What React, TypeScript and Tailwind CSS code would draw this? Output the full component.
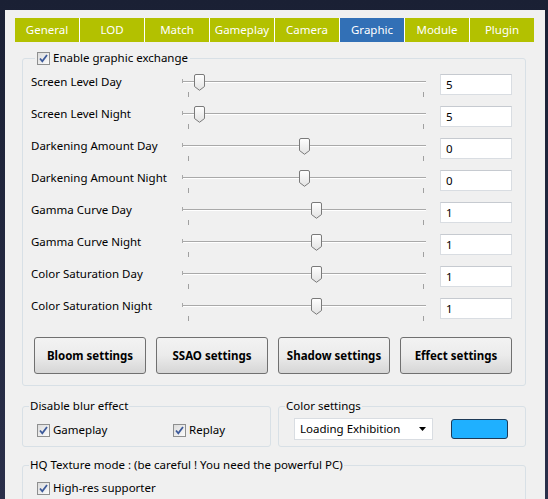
import React from 'react';

const tabs = ['General', 'LOD', 'Match', 'Gameplay', 'Camera', 'Graphic', 'Module', 'Plugin'];

const sliders = [
  { label: 'Screen Level Day', pos: 17, value: '5' },
  { label: 'Screen Level Night', pos: 17, value: '5' },
  { label: 'Darkening Amount Day', pos: 122, value: '0' },
  { label: 'Darkening Amount Night', pos: 122, value: '0' },
  { label: 'Gamma Curve Day', pos: 134, value: '1' },
  { label: 'Gamma Curve Night', pos: 134, value: '1' },
  { label: 'Color Saturation Day', pos: 134, value: '1' },
  { label: 'Color Saturation Night', pos: 134, value: '1' },
];

const buttons = ['Bloom settings', 'SSAO settings', 'Shadow settings', 'Effect settings'];

function CheckBox() {
  return (
    <span className="w-[13px] h-[13px] shrink-0 border border-[#8e8f8f] bg-gradient-to-br from-[#dcdcdc] to-[#fbfbfb] flex items-center justify-center">
      <svg width="11" height="11" viewBox="0 0 11 11">
        <path d="M2 5.5 L4.3 8.3 L9 2" fill="none" stroke="#3d5a9a" strokeWidth="1.8" />
      </svg>
    </span>
  );
}

function Thumb() {
  return (
    <svg width="11" height="17" viewBox="0 0 11 17">
      <defs>
        <linearGradient id="tg" x1="0" y1="0" x2="0" y2="1">
          <stop offset="0" stopColor="#ffffff" />
          <stop offset="1" stopColor="#e2e2e2" />
        </linearGradient>
      </defs>
      <path d="M0.5 2 Q0.5 0.5 2 0.5 H9 Q10.5 0.5 10.5 2 V12.5 L5.5 16.3 L0.5 12.5 Z" fill="url(#tg)" stroke="#7a7a7a" />
    </svg>
  );
}

function SliderRow({ label, pos, value }: { label: string; pos: number; value: string }) {
  return (
    <div className="flex items-start h-[32px]">
      <div className="w-[151px] mt-[8px] leading-[16px]">{label}</div>
      <div className="relative w-[244px] h-[32px]">
        <div className="absolute left-0 right-0 top-[15px] h-px bg-[#a9a9a9]" />
        <div className="absolute left-0 right-0 top-[16px] h-px bg-white" />
        <div className="absolute left-0 top-[13px] w-px h-[4px] bg-[#a9a9a9]" />
        <div className="absolute left-[6px] top-[26px] w-px h-[5px] bg-[#a0a0a0]" />
        <div className="absolute left-[241px] top-[26px] w-px h-[5px] bg-[#a0a0a0]" />
        <div className="absolute top-[8px]" style={{ left: pos - 5 }}>
          <Thumb />
        </div>
      </div>
      <div className="ml-[14px] mt-[8px] w-[72px] h-[21px] bg-white border border-[#d9dde2] border-t-[#c6cad0] pl-[5px] leading-[19px]">
        {value}
      </div>
    </div>
  );
}

export default function App() {
  return (
    <div
      className="w-[548px] h-[499px] overflow-hidden bg-gradient-to-b from-[#1a2034] to-[#2a2f4a] pt-[10px] pl-[5px] pr-[3px] flex text-[11.5px] text-black"
      style={{ fontFamily: '"Noto Sans", "Open Sans", sans-serif' }}
    >
      <div className="flex-1 bg-[#f0f0f0] overflow-hidden">
        <div className="ml-[10px] mt-[8px] flex gap-px bg-white w-[519px]">
          {tabs.map((t) => (
            <div
              key={t}
              className={`w-[64px] h-[24px] flex items-center justify-center text-white text-[11.5px] ${
                t === 'Graphic' ? 'bg-[#3270b6]' : 'bg-[#b3c100]'
              }`}
            >
              {t}
            </div>
          ))}
        </div>

        <div className="ml-[17px] w-[504px]">
          <fieldset className="mt-[8px] border border-[#d8e0e6] rounded-[3px] px-[8px] pb-[11px]">
            <legend className="flex items-center gap-[3px] h-[16px] ml-[4px] px-[2px]">
              <CheckBox />
              <span>Enable graphic exchange</span>
            </legend>
            {sliders.map((s) => (
              <SliderRow key={s.label} {...s} />
            ))}
            <div className="flex gap-[10px] ml-[3px] mt-[15px]">
              {buttons.map((b) => (
                <div
                  key={b}
                  className="w-[112px] h-[37px] rounded-[3px] border border-[#707070] bg-gradient-to-b from-[#f3f3f3] via-[#ebebeb] to-[#d6d6d6] flex items-center justify-center font-bold"
                >
                  {b}
                </div>
              ))}
            </div>
          </fieldset>

          <div className="flex gap-[7px] mt-[12px]">
            <fieldset className="w-[249px] border border-[#d8e0e6] rounded-[3px] pb-[6px]">
              <legend className="h-[16px] ml-[6px] px-[1px] leading-[16px]">Disable blur effect</legend>
              <div className="flex items-center h-[20px] mt-[6px] pl-[14px]">
                <div className="flex items-center gap-[3px] w-[136px]">
                  <CheckBox />
                  <span>Gameplay</span>
                </div>
                <div className="flex items-center gap-[3px]">
                  <CheckBox />
                  <span>Replay</span>
                </div>
              </div>
            </fieldset>

            <fieldset className="w-[248px] border border-[#d8e0e6] rounded-[3px] pb-[6px]">
              <legend className="h-[16px] ml-[6px] px-[1px] leading-[16px]">Color settings</legend>
              <div className="flex items-center h-[22px] mt-[4px] pl-[15px]">
                <div className="w-[139px] h-[22px] bg-white border border-[#d9dde2] flex items-center justify-between pl-[5px] pr-[6px]">
                  <span>Loading Exhibition</span>
                  <svg width="7" height="4" viewBox="0 0 7 4">
                    <path d="M0 0 H7 L3.5 4 Z" fill="#000" />
                  </svg>
                </div>
                <div className="ml-[18px] w-[57px] h-[20px] rounded-[3px] border border-[#1d3a57] bg-[#1fb0ff]" />
              </div>
            </fieldset>
          </div>

          <fieldset className="mt-[10px] border border-[#d8e0e6] rounded-[3px] h-[60px]">
            <legend className="h-[16px] ml-[6px] px-[1px] leading-[16px]">
              HQ Texture mode : (be careful ! You need the powerful PC)
            </legend>
            <div className="flex items-center gap-[3px] h-[20px] mt-[5px] pl-[14px]">
              <CheckBox />
              <span>High-res supporter</span>
            </div>
          </fieldset>
        </div>
      </div>
    </div>
  );
}
